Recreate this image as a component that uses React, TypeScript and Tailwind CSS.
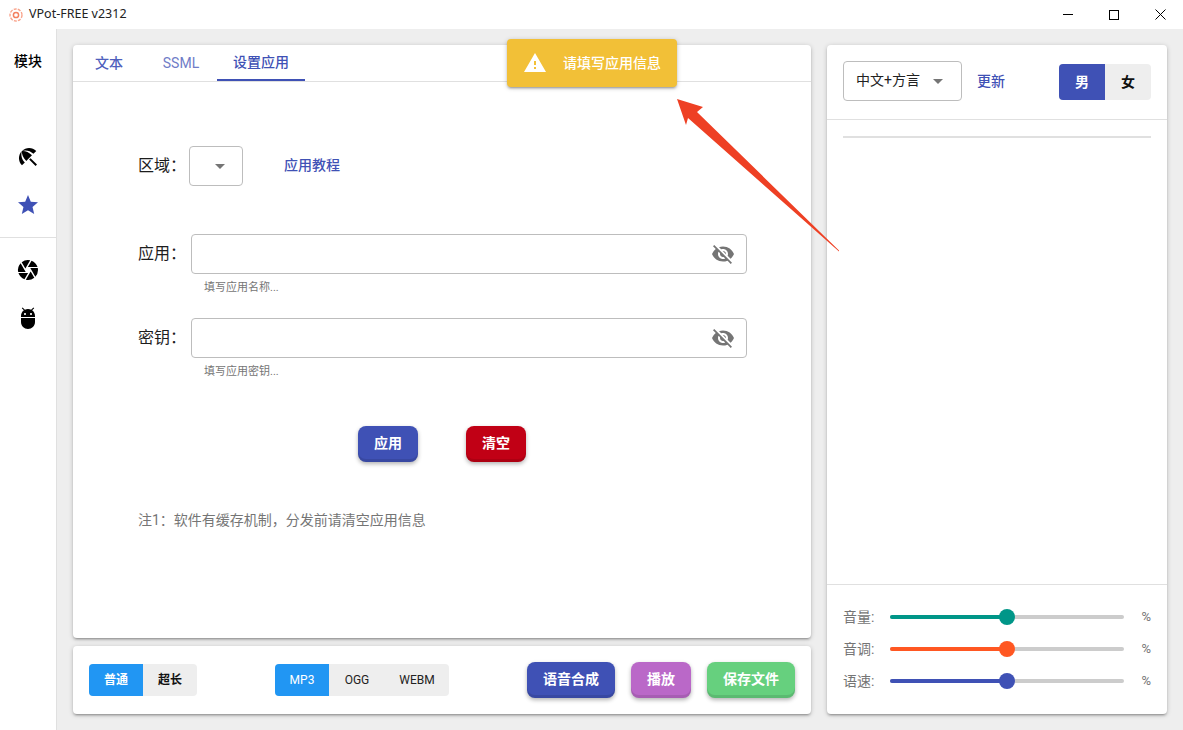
import { MdAdb, MdArrowDropDown, MdBeachAccess, MdCamera, MdStar, MdVisibilityOff, MdWarning } from 'react-icons/md'

const fontStack = { fontFamily: 'Roboto, "Noto Sans CJK SC", sans-serif' }
const cardClass =
  'bg-white rounded-[4px] shadow-[0_1px_5px_rgba(0,0,0,0.2),0_2px_2px_rgba(0,0,0,0.14),0_3px_1px_-2px_rgba(0,0,0,0.12)]'
const pushBtn =
  'flex items-center justify-center h-9 pb-[3px] rounded-lg text-white text-sm font-bold shadow-[inset_0_-3px_0_rgba(0,0,0,0.1),0_2px_4px_rgba(0,0,0,0.3)]'

const sliders = [
  { label: '音量:', fill: 'bg-[#009688]' },
  { label: '音调:', fill: 'bg-[#ff5722]' },
  { label: '语速:', fill: 'bg-[#3f51b5]' },
]

function TitleBar() {
  return (
    <div className="h-[29px] bg-white flex items-center justify-between">
      <div className="flex items-center pl-[9px]">
        <svg width="14" height="14" viewBox="0 0 14 14" fill="none">
          <circle cx="7" cy="7" r="6" stroke="#f9a48c" strokeWidth="1.4" strokeDasharray="3 1.2" />
          <circle cx="7" cy="7" r="2.6" stroke="#f4805f" strokeWidth="1.5" />
        </svg>
        <span className="ml-[6px] text-[12.5px] text-[#222]" style={{ fontFamily: '"Noto Sans", sans-serif' }}>
          VPot-FREE v2312
        </span>
      </div>
      <div className="flex items-center">
        <div className="w-[46px] h-[29px] flex items-center justify-center">
          <div className="w-[10px] h-px bg-black" />
        </div>
        <div className="w-[46px] h-[29px] flex items-center justify-center">
          <div className="w-[10px] h-[10px] border border-black" />
        </div>
        <div className="w-[46px] h-[29px] flex items-center justify-center">
          <svg width="11" height="11" viewBox="0 0 11 11" stroke="#000" strokeWidth="1">
            <path d="M0.5 0.5l10 10M10.5 0.5l-10 10" />
          </svg>
        </div>
      </div>
    </div>
  )
}

function Sidebar() {
  return (
    <div className="w-[57px] shrink-0 bg-white border-r border-[#e0e0e0] flex flex-col">
      <div className="h-[64px] flex items-center justify-center text-sm font-medium text-black">模块</div>
      <div className="h-10" />
      <div className="h-12 flex items-center justify-center">
        <MdBeachAccess size={24} color="#000" />
      </div>
      <div className="h-12 flex items-center justify-center">
        <MdStar size={24} color="#3f51b5" />
      </div>
      <div className="h-px bg-[#e0e0e0] mt-2 mb-2" />
      <div className="h-12 flex items-center justify-center">
        <MdCamera size={24} color="#000" />
      </div>
      <div className="h-12 flex items-center justify-center">
        <MdAdb size={24} color="#000" />
      </div>
    </div>
  )
}

function SecretField({ label, hint, className }: { label: string; hint: string; className: string }) {
  return (
    <div className={className}>
      <div className="flex items-center">
        <div className="w-[53px] text-base text-[#1d1d1d] -mt-px">{label}</div>
        <div className="w-[556px] h-10 border border-[#bdbdbd] rounded-[4px] flex items-center justify-end pr-[11px]">
          <MdVisibilityOff size={24} color="#757575" />
        </div>
      </div>
      <div className="ml-[66px] mt-[7px] text-[11px] leading-[14px] text-[#757575]">{hint}</div>
    </div>
  )
}

function MainCard() {
  return (
    <div className={`${cardClass} h-[593px] flex flex-col`}>
      <div className="h-[37px] border-b border-[#e0e0e0] flex text-sm font-medium">
        <div className="w-[72px] flex items-center justify-center text-[#4f5fbd]">文本</div>
        <div className="w-[72px] flex items-center justify-center text-[#6f7cc7] font-normal">SSML</div>
        <div className="w-[88px] h-9 flex items-center justify-center text-[#3f51b5] border-b-2 border-[#3f51b5]">
          设置应用
        </div>
      </div>
      <div className="pl-[65px] flex flex-col">
        <div className="flex items-center mt-[64px]">
          <div className="w-[51px] text-base text-[#1d1d1d] -mt-px">区域：</div>
          <div className="w-[54px] h-10 border border-[#bdbdbd] rounded-[4px] flex items-center justify-center pl-2">
            <MdArrowDropDown size={24} color="#757575" />
          </div>
          <div className="ml-[41px] text-sm font-medium text-[#3f51b5] -mt-[2px]">应用教程</div>
        </div>
        <SecretField className="mt-[48px]" label="应用：" hint="填写应用名称..." />
        <SecretField className="mt-[23px]" label="密钥：" hint="填写应用密钥..." />
        <div className="flex mt-[47px] ml-[220px] gap-12">
          <div className={`${pushBtn} w-[60px] bg-[#3f51b5]`}>应用</div>
          <div className={`${pushBtn} w-[60px] bg-[#c10015]`}>清空</div>
        </div>
        <div className="mt-[48px] text-sm leading-5 text-[#757575]">注1：软件有缓存机制，分发前请清空应用信息</div>
      </div>
    </div>
  )
}

function BottomCard() {
  return (
    <div className={`${cardClass} h-[68px] flex items-center pl-4 pr-4`}>
      <div className="flex h-8 rounded-[4px] overflow-hidden bg-[#eeeeee] text-xs font-bold">
        <div className="w-[54px] flex items-center justify-center bg-[#2196f3] text-white">普通</div>
        <div className="w-[54px] flex items-center justify-center text-[#111]">超长</div>
      </div>
      <div className="flex h-8 ml-[78px] rounded-[4px] overflow-hidden bg-[#eeeeee] text-xs">
        <div className="w-[54px] flex items-center justify-center bg-[#2196f3] text-white">MP3</div>
        <div className="w-[56px] flex items-center justify-center text-[#222]">OGG</div>
        <div className="w-[64px] flex items-center justify-center text-[#222]">WEBM</div>
      </div>
      <div className="flex ml-auto gap-4">
        <div className={`${pushBtn} w-[88px] bg-[#3f51b5]`}>语音合成</div>
        <div className={`${pushBtn} w-[60px] bg-[#ba68c8]`}>播放</div>
        <div className={`${pushBtn} w-[88px] bg-[#66d07e]`}>保存文件</div>
      </div>
    </div>
  )
}

function RightCard() {
  return (
    <div className={`${cardClass} w-[340px] flex flex-col`}>
      <div className="h-[75px] border-b border-[#e0e0e0] flex items-center px-4">
        <div className="w-[119px] h-10 -mt-[2px] border border-[#bdbdbd] rounded-[4px] flex items-center pl-3 pr-[11px] justify-between text-sm text-[#222]">
          <span className="-mt-[3px]">中文+方言</span>
          <MdArrowDropDown size={24} color="#757575" />
        </div>
        <div className="ml-[15px] text-sm font-medium text-[#3f51b5] -mt-[2px]">更新</div>
        <div className="ml-auto flex h-9 rounded-[4px] overflow-hidden bg-[#eeeeee] text-sm font-bold">
          <div className="w-[46px] flex items-center justify-center bg-[#3f51b5] text-white">男</div>
          <div className="w-[46px] flex items-center justify-center text-[#111]">女</div>
        </div>
      </div>
      <div className="h-[2px] bg-[#e0e0e0] mx-4 mt-4" />
      <div className="flex-1" />
      <div className="h-[130px] border-t border-[#e0e0e0] px-4 pt-4 flex flex-col">
        {sliders.map((s) => (
          <div key={s.label} className="h-8 flex items-center text-[#757575]">
            <div className="w-[47px] text-sm">{s.label}</div>
            <div className="w-[235px] h-1 rounded-full bg-[#cccccc] relative">
              <div className={`${s.fill} h-1 w-[117px] rounded-full`} />
              <div className={`${s.fill} absolute left-[109px] -top-[6px] w-4 h-4 rounded-full`} />
            </div>
            <div className="ml-[17px] text-[13px]">%</div>
          </div>
        ))}
      </div>
    </div>
  )
}

export default function App() {
  return (
    <div className="w-[1183px] h-[730px] overflow-hidden relative bg-[#eeeeee] flex flex-col" style={fontStack}>
      <TitleBar />
      <div className="flex-1 flex">
        <Sidebar />
        <div className="flex-1 flex gap-4 pt-4 pb-4 pl-4 pr-4">
          <div className="w-[738px] flex flex-col gap-2">
            <MainCard />
            <BottomCard />
          </div>
          <RightCard />
        </div>
      </div>

      <div className="absolute left-[507px] top-[39px] w-[170px] h-12 rounded-[4px] bg-[#f2c037] flex items-center pl-4 shadow-[0_1px_5px_rgba(0,0,0,0.2),0_2px_2px_rgba(0,0,0,0.14),0_3px_1px_-2px_rgba(0,0,0,0.12)]">
        <MdWarning size={24} color="#fff" />
        <span className="ml-[16px] -mt-px text-sm font-medium text-white">请填写应用信息</span>
      </div>

      <svg className="absolute left-[670px] top-[90px]" width="175" height="170" viewBox="670 90 175 170">
        <polygon points="677,99 703,107 697,112 839,250.5 839,251.5 688,118 686,125" fill="#ee4024" />
      </svg>
    </div>
  )
}
